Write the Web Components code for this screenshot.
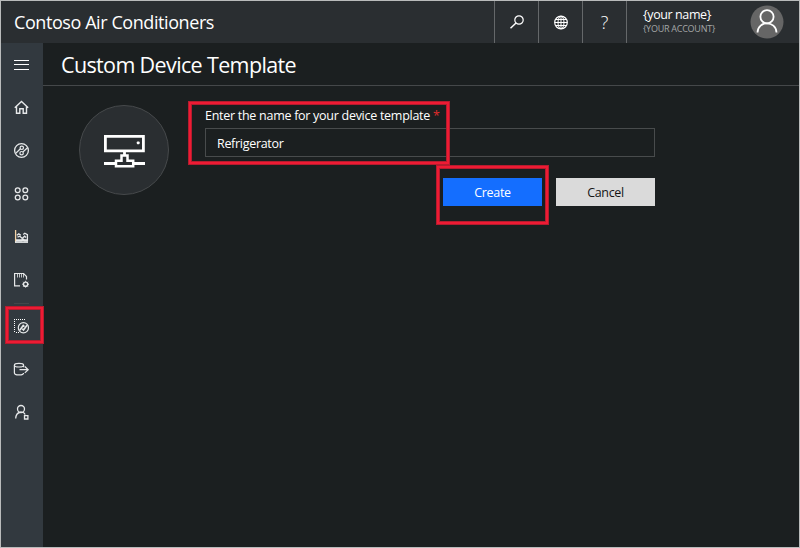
<!DOCTYPE html>
<html lang="en">
<head>
<meta charset="utf-8">
<title>Custom Device Template</title>
<style>
html,body{margin:0;height:100%;background:#1b1f20}
body{font-family:"Open Sans","Noto Sans",sans-serif;color:#fff;overflow:hidden}
</style>
</head>
<body>
<app-shell>
  <top-bar slot="top" label="Contoso Air Conditioners"></top-bar>
  <side-nav slot="nav"></side-nav>
  <page-title slot="main">Custom Device Template</page-title>
  <device-form slot="main"></device-form>
  <mark-box slot="marks" style="left:188px;top:101px;width:262px;height:64px"></mark-box>
  <mark-box slot="marks" style="left:436px;top:165px;width:113px;height:60px"></mark-box>
  <mark-box slot="marks" style="left:5px;top:306px;width:39px;height:38px"></mark-box>
</app-shell>
<script>
function define(name, html, setup) {
  customElements.define(name, class extends HTMLElement {
    constructor() {
      super();
      this.attachShadow({mode: 'open'});
    }
    connectedCallback() {
      this.shadowRoot.innerHTML = html;
      if (setup) setup(this, this.shadowRoot);
    }
  });
}

const icons = {
  menu: '<path d="M14 9.5h15M14 13.5h15M14 18.5h15" stroke="#fff"/>',
  home: '<path d="M14.8 14.7l6.7-6.2 6.7 6.2M16.5 13.5v6.8h3.3v-4.6h3.4v4.6h3.3v-6.8" stroke-width="1.4"/>',
  explorer: '<circle cx="21.5" cy="14.5" r="6.9" stroke-width="1.3"/><circle cx="21.8" cy="11.8" r="1.7" stroke-width="1.2"/><circle cx="21.6" cy="17.2" r="1.7" stroke-width="1.2"/><path d="M20.4 12.8l-4.6 4.4M22.9 16l4.6-4.3" stroke-width="1.2"/>',
  sets: '<g stroke-width="1.3"><circle cx="17.7" cy="11.2" r="2.4"/><circle cx="25.3" cy="11.2" r="2.4"/><circle cx="17.7" cy="18.5" r="2.4"/><circle cx="25.3" cy="18.5" r="2.4"/></g>',
  chart: '<path d="M15.6 8v12.4" stroke="#f3d2a4" stroke-width="1.3"/><path d="M15 20.1h13" stroke-width="1.6"/><path d="M16.8 13.3l2-1.4 2 1.4M23.2 12.4l1.6-1.2 2.6 1.4v7M17.5 15.2l2.4-1 2.3 2.2 2.4-2.2 1.4 1.3" stroke-width="1.3"/><path d="M16 18.4h5.5l1.5-.8 1.5.8h3" stroke-width="2.2"/>',
  jobs: '<path d="M20 20.9h-5.4v-12.4h9l2.9 3v3" stroke-width="1.2"/><path d="M17.5 9v3.5M19.5 9v3.5M21.5 9v3.5M23.5 9v3.5" stroke-width=".8"/><circle cx="25.6" cy="19.2" r="2.1" stroke-width="1.4"/><path d="M25.6 15.8v1M25.6 21.6v1M22.2 19.2h1M28 19.2h1M23.3 16.8l.7.7M27.9 16.8l-.7.7M23.3 21.6l.7-.7M27.9 21.6l-.7-.7"/>',
  template: '<g stroke-dasharray="1 1" stroke="#fff"><path d="M14 7.5h11M14.5 9v12M16 20.5h3"/></g><circle cx="23.4" cy="15.7" r="5.1" stroke-width="1.2"/><path d="M19.8 18.2l3.4-4.7 1.2 1.1M22.3 16.8l1.2 1.2 3.5-4.7" stroke-width="1.6"/>',
  export: '<g stroke-width="1.2"><ellipse cx="19" cy="10.2" rx="4.6" ry="1.8"/><path d="M14.4 10.2v7.8c0 2.6 9.2 2.6 9.2 0M23.6 10.2v2M19.5 14.7h8.5M24.8 11.5l3.4 3.2-3.4 3.2"/></g>',
  admin: '<circle cx="21" cy="11" r="3.5" stroke-width="1.3"/><path d="M15.7 20.6c.3-7.8 8.5-7.8 9.3-4" stroke-width="1.3"/><path d="M24.5 17.6h3.4V21h-3.4z" stroke-width="1.3"/>'
};

define('nav-icon', `<style>
:host{display:block;width:42px;height:29px}
svg{display:block;fill:none;stroke:#e6e8e9;stroke-width:1}
</style><svg width="42" height="29" viewBox="1 0 42 29"></svg>`,
(host, root) => { root.querySelector('svg').innerHTML = icons[host.getAttribute('name')]; });

define('side-nav', `<style>
:host{display:flex;flex-direction:column;background:#32393f;box-sizing:border-box;padding-top:8px;gap:14px;height:100%}
hr{border:0;flex:none;height:1px;width:15px;background:#42474a;margin:-5px 13px -6px}
nav-icon[name=home]{margin-top:-1px}
</style>
<nav-icon name="menu"></nav-icon><nav-icon name="home"></nav-icon><nav-icon name="explorer"></nav-icon>
<nav-icon name="sets"></nav-icon><nav-icon name="chart"></nav-icon><nav-icon name="jobs"></nav-icon>
<hr>
<nav-icon name="template"></nav-icon><nav-icon name="export"></nav-icon><nav-icon name="admin"></nav-icon>`);

define('tool-cell', `<style>
:host{display:flex;width:43px;height:42px;border-left:1px solid #65686a;align-items:center;justify-content:center}
</style><slot></slot>`);

define('top-bar', `<style>
:host{display:flex;height:42px;background:#2a2e31}
h1{flex:1;margin:0;padding-left:13px;font-size:18px;line-height:42px;font-weight:400;white-space:nowrap}
svg{display:block;fill:none;stroke:#fff}
.q{font-size:18px;font-weight:300;line-height:42px}
.user{display:flex;border-left:1px solid #65686a;width:173px;box-sizing:border-box;padding:0 15px 0 16px;justify-content:space-between;align-items:center}
.name{font-size:12.5px;line-height:15px}
.acct{font-size:9px;line-height:13px;color:#a4a6a7}
.name,.acct{white-space:nowrap}
.title,.name span,.acct span{display:inline-block}
.who{margin-top:-3px}
</style>
<h1><span class="title"></span></h1>
<tool-cell><svg width="16" height="16"><circle cx="10" cy="6" r="4.2" stroke-width="1.2"/><path d="M7 9L1.5 14.2" stroke-width="1.5"/></svg></tool-cell>
<tool-cell><svg width="16" height="16"><circle cx="8" cy="8.5" r="6.3" stroke-width="1.2"/><ellipse cx="8" cy="8.5" rx="3" ry="6.3"/><path d="M8 2.2v12.6M2.5 5.5h11M1.7 8.5h12.6M2.5 11.5h11"/></svg></tool-cell>
<tool-cell><span class="q">?</span></tool-cell>
<div class="user"><div class="who"><div class="name"><span>{your name}</span></div><div class="acct"><span>{YOUR ACCOUNT}</span></div></div>
<svg width="34" height="34"><circle cx="17" cy="17" r="16.5" fill="#666" stroke="none"/><circle cx="17" cy="11.7" r="6.6" stroke-width="1.8"/><path d="M7.5 27.5c.5-12.2 18.5-12.2 19 0" stroke-width="1.8"/></svg></div>`,
(host, root) => {
  root.querySelector('.title').textContent = host.getAttribute('label');
  fit(root.querySelector('.title'), 200);
  fit(root.querySelector('.name span'), 68);
  fit(root.querySelector('.acct span'), 72);
});

/* Spreads the tracking of a label so that it takes the given width. */
function fit(el, width) {
  el.style.whiteSpace = 'nowrap';
  const n = el.textContent.length;
  el.style.letterSpacing = (width - el.getBoundingClientRect().width) / n + 'px';
}

define('page-title', `<style>
:host{display:block;height:42px;border-bottom:1px solid #45484a;padding-left:18px;font-size:21.5px;line-height:44px;white-space:nowrap}
span{display:inline-block}
</style><span></span>`,
(host, root) => { const s = root.querySelector('span'); s.textContent = host.textContent; fit(s, 235); });

define('push-button', `<style>
:host{display:flex;width:99px;height:28px;align-items:center;justify-content:center;font-size:12.5px;background:#dadada;color:#151515}
:host([primary]){background:#146eff;color:#fff}
span{display:inline-block}
</style><span></span>`,
(host, root) => { const s = root.querySelector('span'); s.textContent = host.textContent; fit(s, 36.5); });

define('device-form', `<style>
:host{display:flex;padding:19px 0 0 36px;gap:36px}
.badge{width:88px;height:88px;border-radius:50%;border:1px solid #46494b;background:#2a2e31}
svg{display:block;fill:none;stroke:#fff;stroke-width:2.8}
.fields{width:450px}
.label{font-size:12.5px;line-height:18px;padding-top:2px;height:23px;box-sizing:border-box;white-space:nowrap}
.label span{display:inline-block}
.label i{color:#e02b2b;font-style:normal;margin-left:3px}
.input{height:27px;border:1px solid #484b4c;padding-left:11px;font-size:12.5px;line-height:29px}
.input span{display:inline-block}
.actions{display:flex;justify-content:flex-end;gap:14px;margin-top:21px}
</style>
<div class="badge"><svg width="88" height="88"><path d="M25.4 30.4h38v14.4h-38z"/><rect x="56.8" y="35.5" width="2.8" height="2.8" rx=".8" fill="#fff" stroke="none"/><path d="M44.5 45v4M24 57.5h11M54 57.5h11"/><path d="M41.5 56v-6.5h6V56M42.5 54.8H36v5.4h17.2v-5.4h-6.5" stroke-width="2.5"/></svg></div>
<div class="fields"><div class="label"><span>Enter the name for your device template</span><i>*</i></div>
<div class="input"><span>Refrigerator</span></div>
<div class="actions"><push-button primary>Create</push-button><push-button>Cancel</push-button></div></div>`,
(host, root) => {
  fit(root.querySelector('.label span'), 225);
  fit(root.querySelector('.input span'), 66.5);
});

define('mark-box', `<style>
:host{display:block;position:absolute;box-sizing:border-box;border:1px solid #b51c2e;box-shadow:inset 0 0 0 2px #ee1b34,inset 0 0 0 3px #b51c2e}
</style>`);

define('app-shell', `<style>
:host{display:grid;position:relative;grid-template:42px 1fr / 42px 1fr;width:800px;height:548px;box-sizing:border-box;border:1px solid #b9bbbb;background:#1b1f20}
header{grid-column:1 / 3}
.marks{position:absolute;left:-1px;top:-1px;width:0;height:0}
</style><header><slot name="top"></slot></header><nav><slot name="nav"></slot></nav><main><slot name="main"></slot></main><div class="marks"><slot name="marks"></slot></div>`);
</script>
</body>
</html>
